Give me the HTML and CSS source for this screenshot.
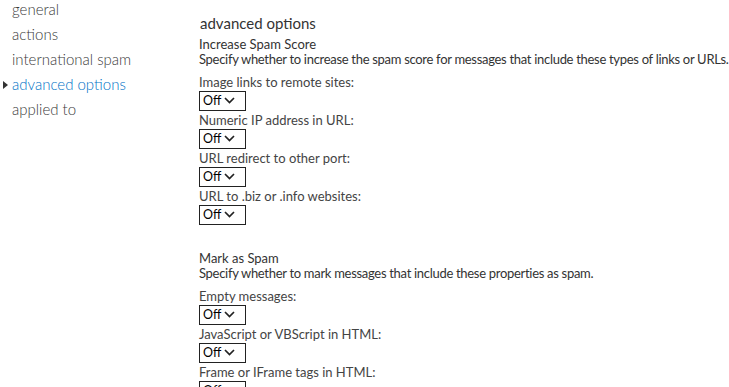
FILE: index.html
```html
<!DOCTYPE html>
<html lang="en">
<head>
    <meta charset="UTF-8">
    <title>advanced options</title>
    <link rel="stylesheet" href="styles.css">
</head>
<body>
    <div class="page">
        <ul class="nav">
            <li>general</li>
            <li>actions</li>
            <li>international spam</li>
            <li class="active">advanced options</li>
            <li>applied to</li>
        </ul>

        <div class="content">
            <h2>advanced options</h2>

            <div class="group">
                <div class="group-title">Increase Spam Score</div>
                <div class="group-desc">Specify whether to increase the spam score for messages that include these types of links or URLs.</div>

                <div class="field">
                    <label>Image links to remote sites:</label>
                    <div class="select">Off <svg class="chev" viewBox="0 0 11 7"><path d="M1 1l4.5 4.5L10 1"/></svg></div>
                </div>
                <div class="field">
                    <label>Numeric IP address in URL:</label>
                    <div class="select">Off <svg class="chev" viewBox="0 0 11 7"><path d="M1 1l4.5 4.5L10 1"/></svg></div>
                </div>
                <div class="field">
                    <label>URL redirect to other port:</label>
                    <div class="select">Off <svg class="chev" viewBox="0 0 11 7"><path d="M1 1l4.5 4.5L10 1"/></svg></div>
                </div>
                <div class="field">
                    <label>URL to .biz or .info websites:</label>
                    <div class="select">Off <svg class="chev" viewBox="0 0 11 7"><path d="M1 1l4.5 4.5L10 1"/></svg></div>
                </div>
            </div>

            <div class="group">
                <div class="group-title">Mark as Spam</div>
                <div class="group-desc">Specify whether to mark messages that include these properties as spam.</div>

                <div class="field">
                    <label>Empty messages:</label>
                    <div class="select">Off <svg class="chev" viewBox="0 0 11 7"><path d="M1 1l4.5 4.5L10 1"/></svg></div>
                </div>
                <div class="field">
                    <label>JavaScript or VBScript in HTML:</label>
                    <div class="select">Off <svg class="chev" viewBox="0 0 11 7"><path d="M1 1l4.5 4.5L10 1"/></svg></div>
                </div>
                <div class="field">
                    <label>Frame or IFrame tags in HTML:</label>
                    <div class="select">Off <svg class="chev" viewBox="0 0 11 7"><path d="M1 1l4.5 4.5L10 1"/></svg></div>
                </div>
            </div>
        </div>
    </div>
</body>
</html>
```

FILE: styles.css
```css
body {
    margin: 0;
    background-color: #fff;
    font-family: Lato, "Open Sans", sans-serif;
    color: #333;
    overflow: hidden;
}
.page {
    display: flex;
}
.nav {
    list-style: none;
    margin: -3px 0 0 0;
    padding: 0;
    width: 199px;
    flex-shrink: 0;
}
.nav li {
    position: relative;
    padding-left: 12px;
    height: 25px;
    line-height: 25px;
    font-size: 15px;
    font-weight: 300;
    color: #3a3a3a;
}
.nav li.active {
    color: #0072c6;
}
.nav li.active::before {
    content: "";
    position: absolute;
    left: 3px;
    top: 9px;
    border-left: 5px solid #333;
    border-top: 4px solid transparent;
    border-bottom: 4px solid transparent;
}
.content {
    padding-top: 13px;
    font-size: 13px;
}
.content h2 {
    margin: 0 0 4px 1px;
    font-size: 15px;
    font-weight: 400;
    line-height: 20px;
    color: #333;
}
.group {
    margin-bottom: 26px;
}
.group-title,
.group-desc {
    line-height: 15px;
}
.group-desc {
    margin-bottom: 6px;
    white-space: nowrap;
    letter-spacing: -0.3px;
}
.field label {
    display: block;
    line-height: 18px;
    color: #444;
}
.select {
    position: relative;
    box-sizing: border-box;
    width: 47px;
    height: 20px;
    border: 1px solid #222;
    padding-left: 3px;
    line-height: 18px;
    font-size: 12.5px;
    color: #000;
}
.chev {
    position: absolute;
    right: 10px;
    top: 5px;
    width: 11px;
    height: 7px;
    fill: none;
    stroke: #222;
    stroke-width: 1.7;
}
```
